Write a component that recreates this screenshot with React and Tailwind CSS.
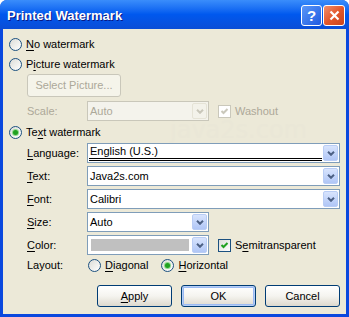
import React from "react";

const Radio = ({ checked }) => (
  <span className="flex h-[13px] w-[13px] shrink-0 items-center justify-center rounded-full border border-[#1C5180] bg-linear-to-br from-[#DCDCD7] to-white">
    {checked && <span className="h-[5px] w-[5px] rounded-full bg-[#21A121] shadow-[0_0_0_1px_#8FD98F]" />}
  </span>
);

const Check = ({ disabled }) => (
  <span
    className={
      "flex h-[13px] w-[13px] shrink-0 items-center justify-center border " +
      (disabled ? "border-[#CAC8BB] bg-white" : "border-[#1C5180] bg-linear-to-br from-[#DCDCD7] to-white")
    }
  >
    <svg width="9" height="9" viewBox="0 0 9 9">
      <path d="M1.5 4 L3.5 6 L7.5 2" stroke={disabled ? "#CAC8BB" : "#21A121"} strokeWidth="2" fill="none" />
    </svg>
  </span>
);

const Arrow = ({ disabled }) => (
  <span
    className={
      "ml-auto mr-[1px] flex h-[16px] w-[15px] shrink-0 items-center justify-center rounded-[2px] border " +
      (disabled ? "border-[#E5E3D6] bg-[#F3F2EA]" : "border-[#B9CDF5] bg-linear-to-b from-[#D8E4FD] to-[#B0C6F6]")
    }
  >
    <svg width="8" height="5" viewBox="0 0 8 5">
      <path d="M1 0.8 L4 3.8 L7 0.8" stroke={disabled ? "#C9C7BA" : "#4D6185"} strokeWidth="2" fill="none" />
    </svg>
  </span>
);

const U = ({ children }) => <span className="underline underline-offset-[2px]">{children}</span>;

const Field = ({ wide, children }) => (
  <div className={"flex h-[20px] items-center border border-[#7F9DB9] bg-white " + (wide ? "w-[253px]" : "w-[122px]")}>
    {children}
    <Arrow />
  </div>
);

const Row = ({ label, children }) => (
  <div className="flex items-center">
    <span className="w-[60px] pl-[24px] box-content">{label}</span>
    {children}
  </div>
);

const XpButton = ({ children, def }) => (
  <button
    className={
      "flex h-[22px] w-[75px] items-center justify-center rounded-[3px] border border-[#003C74] bg-linear-to-b from-white via-[#F5F4EF] to-[#DDD9CE] text-black " +
      (def ? "shadow-[inset_0_0_0_1px_#B5CEF6,inset_0_0_0_2px_#9BBAF3]" : "")
    }
  >
    {children}
  </button>
);

export default function App() {
  return (
    <div className="h-[317px] w-[349px] overflow-hidden rounded-t-[7px] bg-[#0A48DE] font-['Liberation_Sans',Arial,sans-serif] text-[11px] text-black flex flex-col">
      <div className="flex h-[29px] shrink-0 items-center bg-linear-to-b from-[#3A8DFB] via-[#0058EE] to-[#0A4DD6] pl-[7px] pr-[4px]">
        <span className="pt-[3px] text-[13px] font-bold text-white [text-shadow:1px_1px_0_#0A1883]">Printed Watermark</span>
        <div className="ml-auto flex gap-[1px] pt-[2px]">
          <span className="flex h-[21px] w-[21px] items-center justify-center rounded-[3px] border border-white bg-linear-to-br from-[#5A97F8] to-[#2159E0] text-[15px] font-bold leading-none text-white">
            ?
          </span>
          <span className="flex h-[21px] w-[22px] items-center justify-center rounded-[3px] border border-white bg-linear-to-br from-[#F08D6A] via-[#E3572B] to-[#C9431C]">
            <svg width="11" height="11" viewBox="0 0 11 11">
              <path d="M1.5 1.5 L9.5 9.5 M9.5 1.5 L1.5 9.5" stroke="white" strokeWidth="2.2" />
            </svg>
          </span>
        </div>
      </div>
      <div className="relative mx-[3px] mb-[3px] flex flex-1 flex-col bg-[#ECE9D8] pt-[9px]">
        <span className="pointer-events-none absolute left-[167px] top-[89px] font-['DejaVu_Sans',sans-serif] text-[24px] leading-none text-[#EAE7D7]">
          java2s.com
        </span>
        <div className="relative flex h-[13px] items-center gap-[4px] pl-[6px]">
          <Radio />
          <span><U>N</U>o watermark</span>
        </div>
        <div className="relative mt-[7px] flex h-[13px] items-center gap-[4px] pl-[6px]">
          <Radio />
          <span>P<U>i</U>cture watermark</span>
        </div>
        <div className="relative mt-[3px] pl-[24px]">
          <div className="flex h-[23px] w-[94px] items-center justify-center rounded-[3px] border border-[#C9C7BA] bg-[#F5F4EA] text-[#ACA899]">
            Select Picture...
          </div>
        </div>
        <div className="relative mt-[4px] flex h-[20px] items-center text-[#ACA899]">
          <span className="w-[60px] pl-[24px] box-content">Scale:</span>
          <div className="flex h-[20px] w-[122px] items-center border border-[#C9C7BA] bg-[#F4F3EC] pl-[2px]">
            Auto
            <Arrow disabled />
          </div>
          <div className="ml-[9px] flex items-center gap-[4px]">
            <Check disabled />
            <span>Washout</span>
          </div>
        </div>
        <div className="relative mt-[5px] flex h-[13px] items-center gap-[4px] pl-[6px]">
          <Radio checked />
          <span>Te<U>x</U>t watermark</span>
        </div>
        <div className="relative mt-[4px] flex flex-col gap-[3px]">
          <Row label={<><U>L</U>anguage:</>}>
            <Field wide>
              <div className="mb-[1px] ml-[1px] mr-[1px] flex flex-1 items-center self-stretch border-b-[3px] border-double border-black pl-[1px] pt-[1px]">
                English (U.S.)
              </div>
            </Field>
          </Row>
          <Row label={<><U>T</U>ext:</>}>
            <Field wide>
              <span className="pl-[2px]">Java2s.com</span>
            </Field>
          </Row>
          <Row label={<><U>F</U>ont:</>}>
            <Field wide>
              <span className="pl-[2px]">Calibri</span>
            </Field>
          </Row>
          <Row label={<><U>S</U>ize:</>}>
            <Field>
              <span className="pl-[2px]">Auto</span>
            </Field>
          </Row>
          <Row label={<><U>C</U>olor:</>}>
            <Field>
              <span className="ml-[3px] h-[12px] w-[98px] bg-[#C0C0C0]" />
            </Field>
            <div className="ml-[9px] flex items-center gap-[4px]">
              <Check />
              <span>S<U>e</U>mitransparent</span>
            </div>
          </Row>
        </div>
        <div className="relative mt-[4px] flex h-[13px] items-center">
          <span className="w-[61px] pl-[24px] box-content">Layout:</span>
          <div className="flex items-center gap-[4px]">
            <Radio />
            <span><U>D</U>iagonal</span>
          </div>
          <div className="ml-[13px] flex items-center gap-[4px]">
            <Radio checked />
            <span><U>H</U>orizontal</span>
          </div>
        </div>
        <div className="relative mt-[13px] flex justify-end gap-[9px] pr-[6px]">
          <XpButton><span><U>A</U>pply</span></XpButton>
          <XpButton def>OK</XpButton>
          <XpButton>Cancel</XpButton>
        </div>
      </div>
    </div>
  );
}
